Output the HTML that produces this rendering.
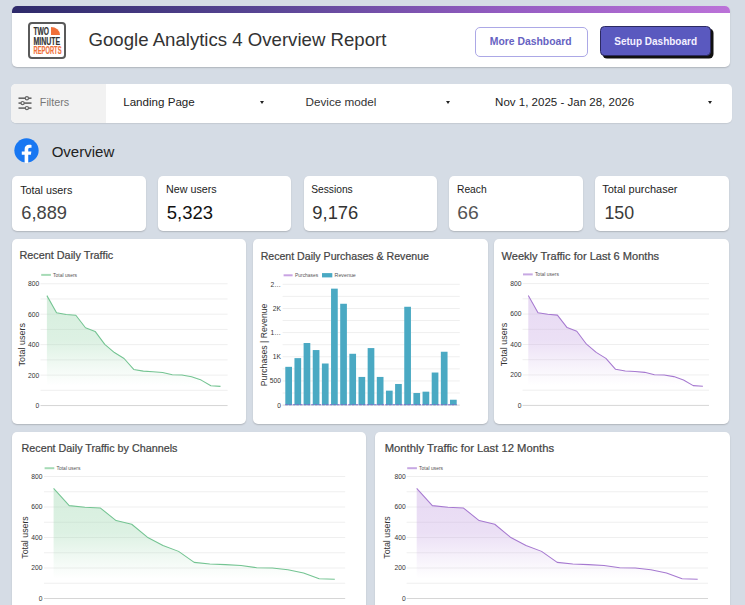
<!DOCTYPE html>
<html><head><meta charset="utf-8">
<style>
*{margin:0;padding:0;box-sizing:border-box}
html,body{width:745px;height:605px;overflow:hidden;background:#d5dce5;font-family:"Liberation Sans",sans-serif}
.abs{position:absolute}
.card{position:absolute;background:#fff;border-radius:5px;box-shadow:0 1px 1.5px rgba(0,0,0,0.18)}
#hdr{left:12px;top:6px;width:718px;height:61px;border-radius:5px;overflow:hidden}
#hdr .bar{position:absolute;left:0;top:0;width:100%;height:7.3px;background:linear-gradient(90deg,#2e2a6a 0%,#584594 35%,#965dc3 70%,#bb72d8 100%)}
#logo{left:28px;top:21.6px;width:38px;height:37.4px;border:2px solid #5a5a5a;border-radius:4px;background:#fff}
.lt{position:absolute;font-weight:bold;font-size:10px;line-height:8px;transform-origin:0 0;letter-spacing:-0.3px;white-space:nowrap}
#title{left:89px;top:27px;font-size:20px;color:#333;white-space:nowrap}
.btn{position:absolute;border-radius:5px;font-size:11.5px;font-weight:bold;text-align:center;white-space:nowrap}
#b1{left:474.5px;top:26.5px;width:113px;height:30px;border:1px solid #aca8e6;color:#5a55b3;line-height:28px;background:#fff}
#b2{left:600px;top:26px;width:111px;height:30.3px;background:#5a59bf;border:1px solid #2c2a62;border-radius:4.5px;box-shadow:2.5px 2.5px 0 #111}
#fbar{left:10.5px;top:84px;width:721px;height:39px;border-radius:5px;box-shadow:0 1px 1px rgba(0,0,0,0.08)}
#fsec{position:absolute;left:0;top:0;width:95.5px;height:39px;background:#f2f2f2;border-radius:5px 0 0 5px}
.ft{position:absolute;font-size:12px;color:#222;white-space:nowrap}
.arr{position:absolute;width:0;height:0;border-left:2.5px solid transparent;border-right:2.5px solid transparent;border-top:3px solid #222;margin-top:0.4px}
#ovt{left:52.5px;top:143px;font-size:16px;color:#222}
.kl{position:absolute;left:9px;top:7px;font-size:12px;color:#222;white-space:nowrap}
.kv{position:absolute;left:10px;top:25px;font-size:19.5px;color:#444;white-space:nowrap}
.ct{position:absolute;font-size:11.5px;color:#444;white-space:nowrap}
svg{position:absolute;left:0;top:0}
.yl{font-size:8px;fill:#444;font-family:"Liberation Sans",sans-serif}
.lg{font-size:5px;fill:#666;font-family:"Liberation Sans",sans-serif}
.yt{font-size:10.5px;fill:#333;font-family:"Liberation Sans",sans-serif}
</style></head><body>
<div id="hdr" class="card"><div class="bar"></div></div>
<div id="logo" class="abs">
    <div class="abs" style="left:21px;top:3px;width:9px;height:8px;background:#f0703a;border-top-right-radius:9px 8px"></div>
    </div>
<div id="b1" class="btn"></div>
<div id="b2" class="btn"></div>

<div id="fbar" class="card">
  <div id="fsec"></div>
  <svg width="20" height="16" style="left:7px;top:12px" viewBox="0 0 20 16">
    <g stroke="#666" stroke-width="1.6" fill="#f2f2f2">
      <line x1="0.5" y1="2.2" x2="13.5" y2="2.2"/><line x1="0.5" y1="7.1" x2="13.5" y2="7.1"/><line x1="0.5" y1="12.1" x2="13.5" y2="12.1"/>
      <circle cx="8.9" cy="2.2" r="1.6" stroke-width="1.2"/><circle cx="4.6" cy="7.1" r="1.6" stroke-width="1.2"/><circle cx="8.9" cy="12.1" r="1.6" stroke-width="1.2"/>
    </g>
  </svg>
      <div class="arr" style="left:249px;top:17px"></div>
    <div class="arr" style="left:435px;top:17px"></div>
    <div class="arr" style="left:697px;top:17px"></div>
</div>

<svg width="25" height="25" style="left:13.8px;top:137.5px" viewBox="0 0 36 36">
  <circle cx="18" cy="18" r="17.5" fill="#1877f2"/>
  <path d="M20.5 36V24h3.8l.7-4.6h-4.5v-3c0-1.3.6-2.5 2.6-2.5h2.1v-3.9s-1.9-.3-3.7-.3c-3.8 0-6.2 2.3-6.2 6.4v3.4h-4.1V24h4.1v12z" fill="#fff"/>
</svg>

<div class="card" style="left:12px;top:176px;width:134px;height:55px"></div>
<div class="card" style="left:157.5px;top:176px;width:133.5px;height:55px"></div>
<div class="card" style="left:304px;top:176px;width:133px;height:55px"></div>
<div class="card" style="left:449px;top:176px;width:133.5px;height:55px"></div>
<div class="card" style="left:595px;top:176px;width:133.5px;height:55px"></div>

<div class="card" style="left:11.5px;top:239px;width:234.7px;height:185px"></div>
<div class="card" style="left:252.5px;top:239px;width:235px;height:185px"></div>
<div class="card" style="left:494px;top:239px;width:234.5px;height:185px"></div>
<div class="card" style="left:11.5px;top:431.7px;width:354.5px;height:200px"></div>
<div class="card" style="left:374.5px;top:431.7px;width:355px;height:200px"></div>

<svg width="745" height="605" viewBox="0 0 745 605" font-family="Liberation Sans, sans-serif">
<line x1="40.5" y1="405.55" x2="227.6" y2="405.55" stroke="#d6d6d6" stroke-width="1"/>
<line x1="40.5" y1="390.32" x2="227.6" y2="390.32" stroke="#efefef" stroke-width="1"/>
<line x1="40.5" y1="375.10" x2="227.6" y2="375.10" stroke="#efefef" stroke-width="1"/>
<line x1="40.5" y1="359.88" x2="227.6" y2="359.88" stroke="#efefef" stroke-width="1"/>
<line x1="40.5" y1="344.65" x2="227.6" y2="344.65" stroke="#efefef" stroke-width="1"/>
<line x1="40.5" y1="329.43" x2="227.6" y2="329.43" stroke="#efefef" stroke-width="1"/>
<line x1="40.5" y1="314.20" x2="227.6" y2="314.20" stroke="#efefef" stroke-width="1"/>
<line x1="40.5" y1="298.98" x2="227.6" y2="298.98" stroke="#efefef" stroke-width="1"/>
<line x1="40.5" y1="283.75" x2="227.6" y2="283.75" stroke="#efefef" stroke-width="1"/>
<text x="39.2" y="407.95" text-anchor="end" font-size="6.7" fill="#333">0</text>
<text x="39.2" y="377.50" text-anchor="end" font-size="6.7" fill="#333">200</text>
<text x="39.2" y="347.05" text-anchor="end" font-size="6.7" fill="#333">400</text>
<text x="39.2" y="316.60" text-anchor="end" font-size="6.7" fill="#333">600</text>
<text x="39.2" y="286.15" text-anchor="end" font-size="6.7" fill="#333">800</text>
<defs><linearGradient id="g1" x1="0" y1="283.75" x2="0" y2="385.7575" gradientUnits="userSpaceOnUse"><stop offset="0" stop-color="#9ad6ad" stop-opacity="0.42"/><stop offset="0.55" stop-color="#9ad6ad" stop-opacity="0.34"/><stop offset="0.8" stop-color="#9ad6ad" stop-opacity="0.14"/><stop offset="1" stop-color="#9ad6ad" stop-opacity="0"/></linearGradient></defs>
<polygon points="46.90,385.76 46.90,295.63 56.54,312.83 66.19,314.50 75.83,315.27 85.48,327.75 95.12,331.40 104.77,344.35 114.41,352.57 124.06,358.50 133.70,369.47 143.34,371.14 152.99,371.75 162.63,372.51 172.28,374.80 181.92,375.10 191.57,376.77 201.21,380.12 210.86,385.76 220.50,386.37 220.50,385.76" fill="url(#g1)"/>
<polyline points="46.90,295.63 56.54,312.83 66.19,314.50 75.83,315.27 85.48,327.75 95.12,331.40 104.77,344.35 114.41,352.57 124.06,358.50 133.70,369.47 143.34,371.14 152.99,371.75 162.63,372.51 172.28,374.80 181.92,375.10 191.57,376.77 201.21,380.12 210.86,385.76 220.50,386.37" fill="none" stroke="#74c492" stroke-width="1.05" stroke-linejoin="round"/>
<line x1="41.2" y1="274.9" x2="50.900000000000006" y2="274.9" stroke="#a6dbb6" stroke-width="2"/>
<text x="53.1" y="276.79999999999995" font-size="5.3" fill="#555" textLength="24" lengthAdjust="spacingAndGlyphs">Total users</text>
<text x="25.1" y="344.65" transform="rotate(-90 25.1 344.65)" text-anchor="middle" font-size="9" fill="#333" textLength="43.5" lengthAdjust="spacingAndGlyphs">Total users</text>
<line x1="282.6" y1="405.10" x2="459.8" y2="405.10" stroke="#d6d6d6" stroke-width="1"/>
<line x1="282.6" y1="393.02" x2="459.8" y2="393.02" stroke="#efefef" stroke-width="1"/>
<line x1="282.6" y1="380.94" x2="459.8" y2="380.94" stroke="#efefef" stroke-width="1"/>
<line x1="282.6" y1="368.86" x2="459.8" y2="368.86" stroke="#efefef" stroke-width="1"/>
<line x1="282.6" y1="356.78" x2="459.8" y2="356.78" stroke="#efefef" stroke-width="1"/>
<line x1="282.6" y1="344.70" x2="459.8" y2="344.70" stroke="#efefef" stroke-width="1"/>
<line x1="282.6" y1="332.62" x2="459.8" y2="332.62" stroke="#efefef" stroke-width="1"/>
<line x1="282.6" y1="320.54" x2="459.8" y2="320.54" stroke="#efefef" stroke-width="1"/>
<line x1="282.6" y1="308.46" x2="459.8" y2="308.46" stroke="#efefef" stroke-width="1"/>
<line x1="282.6" y1="296.38" x2="459.8" y2="296.38" stroke="#efefef" stroke-width="1"/>
<line x1="282.6" y1="284.30" x2="459.8" y2="284.30" stroke="#efefef" stroke-width="1"/>
<text x="281" y="407.50" text-anchor="end" font-size="6.7" fill="#333">0</text>
<text x="281" y="383.34" text-anchor="end" font-size="6.7" fill="#333">500</text>
<text x="281" y="359.18" text-anchor="end" font-size="6.7" fill="#333">1K</text>
<text x="281" y="335.02" text-anchor="end" font-size="6.7" fill="#333">1…</text>
<text x="281" y="310.86" text-anchor="end" font-size="6.7" fill="#333">2K</text>
<text x="281" y="286.70" text-anchor="end" font-size="6.7" fill="#333">2…</text>
<rect x="285.30" y="366.83" width="6.7" height="38.27" fill="#4aa9c3"/>
<rect x="294.45" y="358.13" width="6.7" height="46.97" fill="#4aa9c3"/>
<rect x="303.60" y="343.01" width="6.7" height="62.09" fill="#4aa9c3"/>
<rect x="312.75" y="350.06" width="6.7" height="55.04" fill="#4aa9c3"/>
<rect x="321.90" y="363.50" width="6.7" height="41.60" fill="#4aa9c3"/>
<rect x="331.05" y="288.65" width="6.7" height="116.45" fill="#4aa9c3"/>
<rect x="340.20" y="303.77" width="6.7" height="101.33" fill="#4aa9c3"/>
<rect x="349.35" y="353.78" width="6.7" height="51.32" fill="#4aa9c3"/>
<rect x="358.50" y="376.93" width="6.7" height="28.17" fill="#4aa9c3"/>
<rect x="367.65" y="348.08" width="6.7" height="57.02" fill="#4aa9c3"/>
<rect x="376.80" y="376.93" width="6.7" height="28.17" fill="#4aa9c3"/>
<rect x="385.95" y="390.65" width="6.7" height="14.45" fill="#4aa9c3"/>
<rect x="395.10" y="383.98" width="6.7" height="21.12" fill="#4aa9c3"/>
<rect x="404.25" y="306.77" width="6.7" height="98.33" fill="#4aa9c3"/>
<rect x="413.40" y="393.02" width="6.7" height="12.08" fill="#4aa9c3"/>
<rect x="422.55" y="391.67" width="6.7" height="13.43" fill="#4aa9c3"/>
<rect x="431.70" y="372.53" width="6.7" height="32.57" fill="#4aa9c3"/>
<rect x="440.85" y="351.75" width="6.7" height="53.35" fill="#4aa9c3"/>
<rect x="450.00" y="399.74" width="6.7" height="5.36" fill="#4aa9c3"/>
<line x1="285.3" y1="404.8" x2="456.7" y2="404.8" stroke="#8068c8" stroke-width="1.1" stroke-dasharray="2.5 1.2"/>
<line x1="283.6" y1="275.3" x2="292.6" y2="275.3" stroke="#c9a3e3" stroke-width="2"/>
<text x="295.1" y="277.2" font-size="5.3" fill="#555" textLength="23" lengthAdjust="spacingAndGlyphs">Purchases</text>
<rect x="322" y="273.1" width="10.3" height="4.3" fill="#4aa9c3"/>
<text x="334.6" y="277.2" font-size="5.3" fill="#555">Revenue</text>
<text x="267.1" y="344.9" transform="rotate(-90 267.1 344.9)" text-anchor="middle" font-size="9" fill="#333" textLength="82.5" lengthAdjust="spacingAndGlyphs">Purchases | Revenue</text>
<line x1="522.5" y1="405.40" x2="709" y2="405.40" stroke="#d6d6d6" stroke-width="1"/>
<line x1="522.5" y1="390.17" x2="709" y2="390.17" stroke="#efefef" stroke-width="1"/>
<line x1="522.5" y1="374.95" x2="709" y2="374.95" stroke="#efefef" stroke-width="1"/>
<line x1="522.5" y1="359.73" x2="709" y2="359.73" stroke="#efefef" stroke-width="1"/>
<line x1="522.5" y1="344.50" x2="709" y2="344.50" stroke="#efefef" stroke-width="1"/>
<line x1="522.5" y1="329.27" x2="709" y2="329.27" stroke="#efefef" stroke-width="1"/>
<line x1="522.5" y1="314.05" x2="709" y2="314.05" stroke="#efefef" stroke-width="1"/>
<line x1="522.5" y1="298.83" x2="709" y2="298.83" stroke="#efefef" stroke-width="1"/>
<line x1="522.5" y1="283.60" x2="709" y2="283.60" stroke="#efefef" stroke-width="1"/>
<text x="521.5" y="407.80" text-anchor="end" font-size="6.7" fill="#333">0</text>
<text x="521.5" y="377.35" text-anchor="end" font-size="6.7" fill="#333">200</text>
<text x="521.5" y="346.90" text-anchor="end" font-size="6.7" fill="#333">400</text>
<text x="521.5" y="316.45" text-anchor="end" font-size="6.7" fill="#333">600</text>
<text x="521.5" y="286.00" text-anchor="end" font-size="6.7" fill="#333">800</text>
<defs><linearGradient id="g3" x1="0" y1="283.6" x2="0" y2="385.60749999999996" gradientUnits="userSpaceOnUse"><stop offset="0" stop-color="#c5a3e2" stop-opacity="0.42"/><stop offset="0.55" stop-color="#c5a3e2" stop-opacity="0.34"/><stop offset="0.8" stop-color="#c5a3e2" stop-opacity="0.14"/><stop offset="1" stop-color="#c5a3e2" stop-opacity="0"/></linearGradient></defs>
<polygon points="528.30,385.61 528.30,295.48 538.00,312.68 547.70,314.35 557.40,315.12 567.10,327.60 576.80,331.25 586.50,344.20 596.20,352.42 605.90,358.35 615.60,369.32 625.30,370.99 635.00,371.60 644.70,372.36 654.40,374.65 664.10,374.95 673.80,376.62 683.50,379.97 693.20,385.61 702.90,386.22 702.90,385.61" fill="url(#g3)"/>
<polyline points="528.30,295.48 538.00,312.68 547.70,314.35 557.40,315.12 567.10,327.60 576.80,331.25 586.50,344.20 596.20,352.42 605.90,358.35 615.60,369.32 625.30,370.99 635.00,371.60 644.70,372.36 654.40,374.65 664.10,374.95 673.80,376.62 683.50,379.97 693.20,385.61 702.90,386.22" fill="none" stroke="#a679d0" stroke-width="1.05" stroke-linejoin="round"/>
<line x1="523" y1="274.4" x2="532.7" y2="274.4" stroke="#c7a8e3" stroke-width="2"/>
<text x="534.9" y="276.29999999999995" font-size="5.3" fill="#555" textLength="24" lengthAdjust="spacingAndGlyphs">Total users</text>
<text x="506.9" y="344.50" transform="rotate(-90 506.9 344.50)" text-anchor="middle" font-size="9" fill="#333" textLength="43.5" lengthAdjust="spacingAndGlyphs">Total users</text>
<line x1="44" y1="598.50" x2="345.2" y2="598.50" stroke="#d6d6d6" stroke-width="1"/>
<line x1="44" y1="583.25" x2="345.2" y2="583.25" stroke="#efefef" stroke-width="1"/>
<line x1="44" y1="568.00" x2="345.2" y2="568.00" stroke="#efefef" stroke-width="1"/>
<line x1="44" y1="552.75" x2="345.2" y2="552.75" stroke="#efefef" stroke-width="1"/>
<line x1="44" y1="537.50" x2="345.2" y2="537.50" stroke="#efefef" stroke-width="1"/>
<line x1="44" y1="522.25" x2="345.2" y2="522.25" stroke="#efefef" stroke-width="1"/>
<line x1="44" y1="507.00" x2="345.2" y2="507.00" stroke="#efefef" stroke-width="1"/>
<line x1="44" y1="491.75" x2="345.2" y2="491.75" stroke="#efefef" stroke-width="1"/>
<line x1="44" y1="476.50" x2="345.2" y2="476.50" stroke="#efefef" stroke-width="1"/>
<text x="42.4" y="600.90" text-anchor="end" font-size="6.7" fill="#333">0</text>
<text x="42.4" y="570.40" text-anchor="end" font-size="6.7" fill="#333">200</text>
<text x="42.4" y="539.90" text-anchor="end" font-size="6.7" fill="#333">400</text>
<text x="42.4" y="509.40" text-anchor="end" font-size="6.7" fill="#333">600</text>
<text x="42.4" y="478.90" text-anchor="end" font-size="6.7" fill="#333">800</text>
<defs><linearGradient id="g4" x1="0" y1="476.5" x2="0" y2="578.675" gradientUnits="userSpaceOnUse"><stop offset="0" stop-color="#9ad6ad" stop-opacity="0.42"/><stop offset="0.55" stop-color="#9ad6ad" stop-opacity="0.34"/><stop offset="0.8" stop-color="#9ad6ad" stop-opacity="0.14"/><stop offset="1" stop-color="#9ad6ad" stop-opacity="0"/></linearGradient></defs>
<polygon points="53.60,578.67 53.60,488.39 69.22,505.63 84.84,507.31 100.47,508.07 116.09,520.57 131.71,524.23 147.33,537.20 162.96,545.43 178.58,551.38 194.20,562.36 209.82,564.03 225.44,564.64 241.07,565.41 256.69,567.70 272.31,568.00 287.93,569.68 303.56,573.03 319.18,578.67 334.80,579.28 334.80,578.67" fill="url(#g4)"/>
<polyline points="53.60,488.39 69.22,505.63 84.84,507.31 100.47,508.07 116.09,520.57 131.71,524.23 147.33,537.20 162.96,545.43 178.58,551.38 194.20,562.36 209.82,564.03 225.44,564.64 241.07,565.41 256.69,567.70 272.31,568.00 287.93,569.68 303.56,573.03 319.18,578.67 334.80,579.28" fill="none" stroke="#74c492" stroke-width="1.05" stroke-linejoin="round"/>
<line x1="44.6" y1="468.2" x2="54.3" y2="468.2" stroke="#a6dbb6" stroke-width="2"/>
<text x="56.5" y="470.09999999999997" font-size="5.3" fill="#555" textLength="24" lengthAdjust="spacingAndGlyphs">Total users</text>
<text x="28.2" y="537.50" transform="rotate(-90 28.2 537.50)" text-anchor="middle" font-size="9" fill="#333" textLength="42.5" lengthAdjust="spacingAndGlyphs">Total users</text>
<line x1="406.6" y1="598.50" x2="708" y2="598.50" stroke="#d6d6d6" stroke-width="1"/>
<line x1="406.6" y1="583.25" x2="708" y2="583.25" stroke="#efefef" stroke-width="1"/>
<line x1="406.6" y1="568.00" x2="708" y2="568.00" stroke="#efefef" stroke-width="1"/>
<line x1="406.6" y1="552.75" x2="708" y2="552.75" stroke="#efefef" stroke-width="1"/>
<line x1="406.6" y1="537.50" x2="708" y2="537.50" stroke="#efefef" stroke-width="1"/>
<line x1="406.6" y1="522.25" x2="708" y2="522.25" stroke="#efefef" stroke-width="1"/>
<line x1="406.6" y1="507.00" x2="708" y2="507.00" stroke="#efefef" stroke-width="1"/>
<line x1="406.6" y1="491.75" x2="708" y2="491.75" stroke="#efefef" stroke-width="1"/>
<line x1="406.6" y1="476.50" x2="708" y2="476.50" stroke="#efefef" stroke-width="1"/>
<text x="405.7" y="600.90" text-anchor="end" font-size="6.7" fill="#333">0</text>
<text x="405.7" y="570.40" text-anchor="end" font-size="6.7" fill="#333">200</text>
<text x="405.7" y="539.90" text-anchor="end" font-size="6.7" fill="#333">400</text>
<text x="405.7" y="509.40" text-anchor="end" font-size="6.7" fill="#333">600</text>
<text x="405.7" y="478.90" text-anchor="end" font-size="6.7" fill="#333">800</text>
<defs><linearGradient id="g5" x1="0" y1="476.5" x2="0" y2="578.675" gradientUnits="userSpaceOnUse"><stop offset="0" stop-color="#c5a3e2" stop-opacity="0.42"/><stop offset="0.55" stop-color="#c5a3e2" stop-opacity="0.34"/><stop offset="0.8" stop-color="#c5a3e2" stop-opacity="0.14"/><stop offset="1" stop-color="#c5a3e2" stop-opacity="0"/></linearGradient></defs>
<polygon points="416.70,578.67 416.70,488.39 432.31,505.63 447.92,507.31 463.53,508.07 479.14,520.57 494.76,524.23 510.37,537.20 525.98,545.43 541.59,551.38 557.20,562.36 572.81,564.03 588.42,564.64 604.03,565.41 619.64,567.70 635.26,568.00 650.87,569.68 666.48,573.03 682.09,578.67 697.70,579.28 697.70,578.67" fill="url(#g5)"/>
<polyline points="416.70,488.39 432.31,505.63 447.92,507.31 463.53,508.07 479.14,520.57 494.76,524.23 510.37,537.20 525.98,545.43 541.59,551.38 557.20,562.36 572.81,564.03 588.42,564.64 604.03,565.41 619.64,567.70 635.26,568.00 650.87,569.68 666.48,573.03 682.09,578.67 697.70,579.28" fill="none" stroke="#a679d0" stroke-width="1.05" stroke-linejoin="round"/>
<line x1="407.2" y1="468.2" x2="416.9" y2="468.2" stroke="#c7a8e3" stroke-width="2"/>
<text x="419.09999999999997" y="470.09999999999997" font-size="5.3" fill="#555" textLength="24" lengthAdjust="spacingAndGlyphs">Total users</text>
<text x="390.4" y="537.50" transform="rotate(-90 390.4 537.50)" text-anchor="middle" font-size="9" fill="#333" textLength="42.5" lengthAdjust="spacingAndGlyphs">Total users</text>
<text x="88.50" y="45.90" font-size="18.6" fill="#333" font-weight="normal" textLength="297.85" lengthAdjust="spacingAndGlyphs" >Google Analytics 4 Overview Report</text>
<text x="489.82" y="45.30" font-size="11.2" fill="#6662c2" font-weight="bold" textLength="81.83" lengthAdjust="spacingAndGlyphs" >More Dashboard</text>
<text x="614.23" y="44.60" font-size="11.0" fill="#f4f0ff" font-weight="bold" textLength="82.81" lengthAdjust="spacingAndGlyphs" >Setup Dashboard</text>
<text x="39.84" y="105.70" font-size="10.8" fill="#777" font-weight="normal" textLength="29.39" lengthAdjust="spacingAndGlyphs" >Filters</text>
<text x="123.22" y="105.80" font-size="11.2" fill="#222" font-weight="normal" textLength="71.53" lengthAdjust="spacingAndGlyphs" >Landing Page</text>
<text x="305.52" y="106.00" font-size="11.2" fill="#333" font-weight="normal" textLength="70.93" lengthAdjust="spacingAndGlyphs" >Device model</text>
<text x="495.11" y="106.30" font-size="11.3" fill="#222" font-weight="normal" textLength="139.04" lengthAdjust="spacingAndGlyphs" >Nov 1, 2025 - Jan 28, 2026</text>
<text x="51.64" y="156.80" font-size="15.2" fill="#222" font-weight="normal" textLength="62.67" lengthAdjust="spacingAndGlyphs" >Overview</text>
<text x="20.14" y="193.70" font-size="10.8" fill="#222" font-weight="normal" textLength="52.19" lengthAdjust="spacingAndGlyphs" >Total users</text>
<text x="21.25" y="219.20" font-size="17.8" fill="#444" font-weight="normal" textLength="45.76" lengthAdjust="spacingAndGlyphs" >6,889</text>
<text x="166.04" y="192.90" font-size="10.8" fill="#222" font-weight="normal" textLength="50.59" lengthAdjust="spacingAndGlyphs" >New users</text>
<text x="166.85" y="218.60" font-size="17.8" fill="#111" font-weight="normal" textLength="46.26" lengthAdjust="spacingAndGlyphs" >5,323</text>
<text x="311.24" y="192.90" font-size="10.8" fill="#222" font-weight="normal" textLength="41.49" lengthAdjust="spacingAndGlyphs" >Sessions</text>
<text x="312.35" y="218.90" font-size="17.8" fill="#333" font-weight="normal" textLength="45.96" lengthAdjust="spacingAndGlyphs" >9,176</text>
<text x="456.94" y="192.90" font-size="10.8" fill="#222" font-weight="normal" textLength="29.79" lengthAdjust="spacingAndGlyphs" >Reach</text>
<text x="457.35" y="218.80" font-size="17.8" fill="#555" font-weight="normal" textLength="21.46" lengthAdjust="spacingAndGlyphs" >66</text>
<text x="602.24" y="193.00" font-size="10.8" fill="#222" font-weight="normal" textLength="75.29" lengthAdjust="spacingAndGlyphs" >Total purchaser</text>
<text x="604.45" y="218.60" font-size="17.8" fill="#3a3a3a" font-weight="normal" textLength="29.76" lengthAdjust="spacingAndGlyphs" >150</text>
<text x="19.43" y="259.30" font-size="11.0" fill="#444" font-weight="normal" textLength="93.81" lengthAdjust="spacingAndGlyphs" stroke="#444" stroke-width="0.22">Recent Daily Traffic</text>
<text x="260.63" y="259.80" font-size="11.0" fill="#444" font-weight="normal" textLength="168.31" lengthAdjust="spacingAndGlyphs" stroke="#444" stroke-width="0.22">Recent Daily Purchases &amp; Revenue</text>
<text x="501.53" y="259.60" font-size="11.0" fill="#444" font-weight="normal" textLength="157.61" lengthAdjust="spacingAndGlyphs" stroke="#444" stroke-width="0.22">Weekly Traffic for Last 6 Months</text>
<text x="21.53" y="452.40" font-size="11.0" fill="#444" font-weight="normal" textLength="155.91" lengthAdjust="spacingAndGlyphs" stroke="#444" stroke-width="0.22">Recent Daily Traffic by Channels</text>
<text x="384.73" y="452.40" font-size="11.0" fill="#444" font-weight="normal" textLength="169.31" lengthAdjust="spacingAndGlyphs" stroke="#444" stroke-width="0.22">Monthly Traffic for Last 12 Months</text>
<text x="33.44" y="35.20" font-size="10.8" fill="#333" font-weight="bold" textLength="15.59" lengthAdjust="spacingAndGlyphs" stroke="#333" stroke-width="0.2">TWO</text>
<text x="33.44" y="45.20" font-size="10.8" fill="#333" font-weight="bold" textLength="26.79" lengthAdjust="spacingAndGlyphs" stroke="#333" stroke-width="0.2">MINUTE</text>
<text x="33.50" y="53.80" font-size="10.0" fill="#f07038" font-weight="bold" textLength="28.00" lengthAdjust="spacingAndGlyphs" stroke="#f07038" stroke-width="0.18">REPORTS</text>
</svg>
</body></html>
